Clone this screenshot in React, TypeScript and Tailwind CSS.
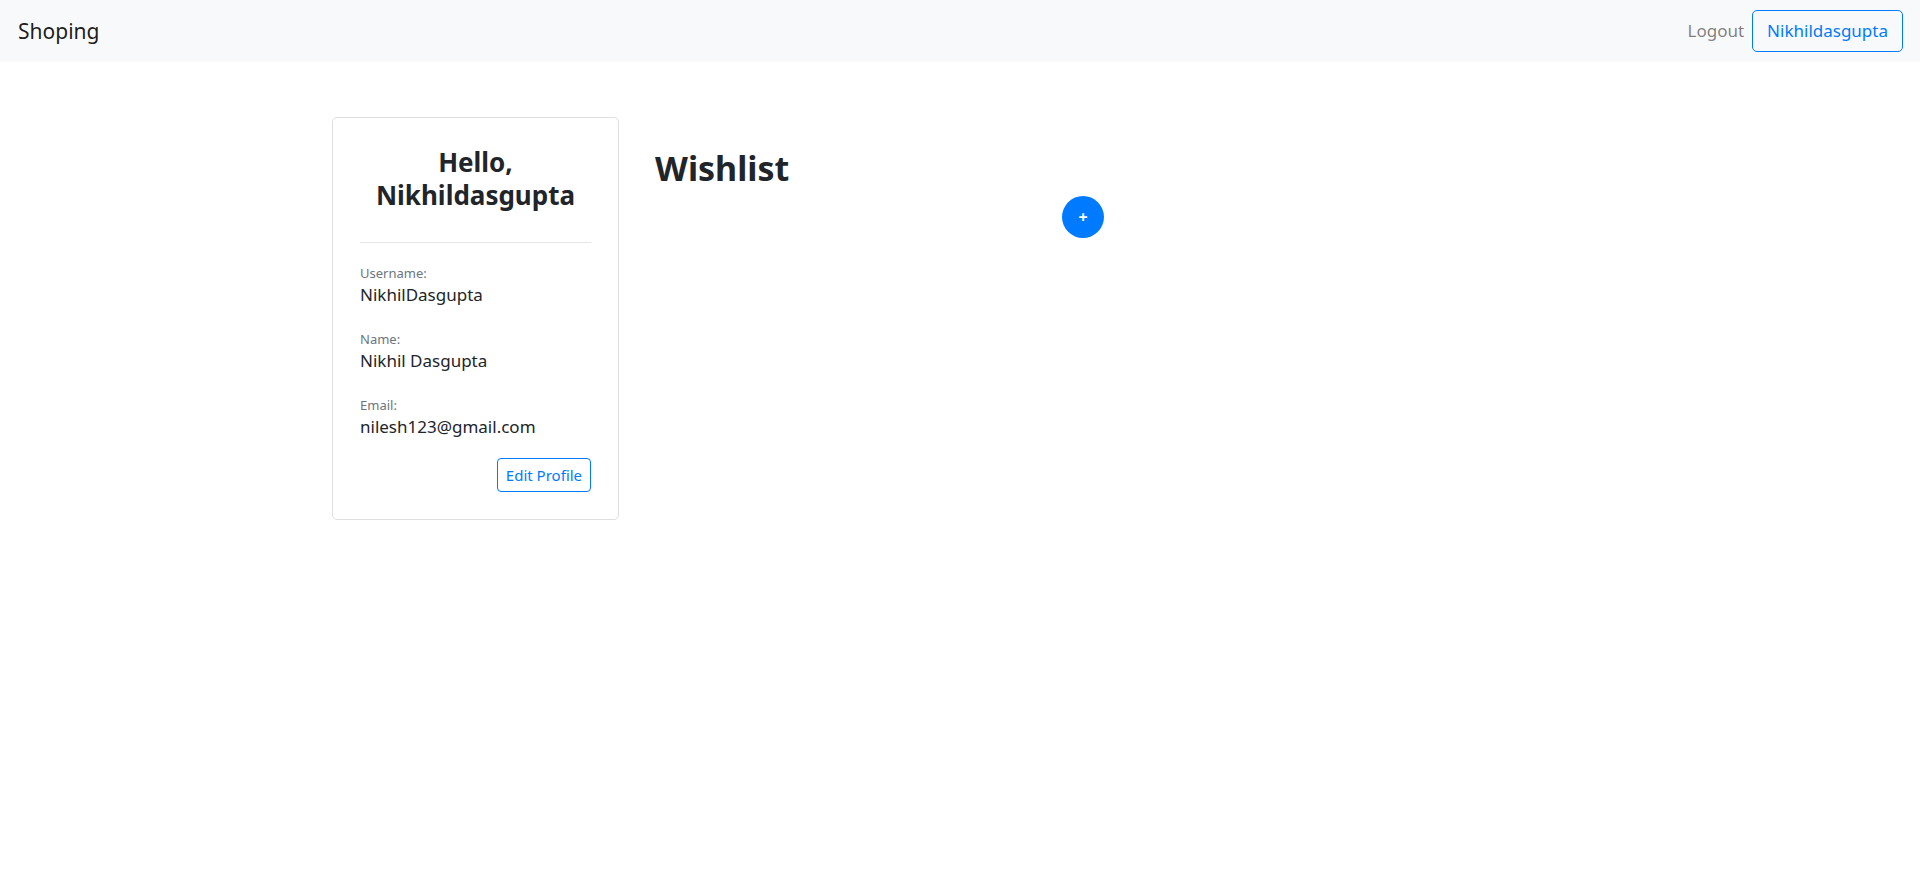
import React from "react";

export default function App() {
  return (
    <div className="min-h-screen bg-white text-[#212529] font-['Noto_Sans',sans-serif]">
      <nav className="flex h-[62px] items-center justify-between bg-[#f8f9fa] pl-[18px] pr-[17px]">
        <span className="text-[21px] leading-none text-black/90">Shoping</span>
        <div className="flex items-center gap-[8px]">
          <span className="text-[17px] text-black/50">Logout</span>
          <button className="h-[42px] rounded-[5px] border border-[#007bff] px-[14px] text-[17px] text-[#007bff]">
            Nikhildasgupta
          </button>
        </div>
      </nav>

      <main className="flex items-start gap-[36px] pl-[332px] pt-[55px]">
        <div className="w-[287px] rounded-[5px] border border-black/[0.125] px-[27px] pb-[27px] pt-[28px]">
          <h3 className="text-center text-[26px] font-bold leading-[33px]">
            <div>Hello,</div>
            <div>Nikhildasgupta</div>
          </h3>
          <hr className="mt-[30px] mb-[21px] border-black/10" />
          <div className="flex flex-col gap-[22px]">
            <div>
              <div className="text-[13px] leading-[18px] text-[#6c757d]">Username:</div>
              <div className="text-[17px] leading-[26px]">NikhilDasgupta</div>
            </div>
            <div>
              <div className="text-[13px] leading-[18px] text-[#6c757d]">Name:</div>
              <div className="text-[17px] leading-[26px]">Nikhil Dasgupta</div>
            </div>
            <div>
              <div className="text-[13px] leading-[18px] text-[#6c757d]">Email:</div>
              <div className="text-[17px] leading-[26px]">nilesh123@gmail.com</div>
            </div>
          </div>
          <div className="mt-[18px] flex justify-end">
            <button className="h-[34px] rounded-[4px] border border-[#007bff] px-[8px] text-[15px] text-[#007bff]">
              Edit Profile
            </button>
          </div>
        </div>

        <section className="w-[449px] pt-[31px]">
          <h1 className="text-[34px] font-bold leading-[40px]">Wishlist</h1>
          <div className="mt-[8px] flex justify-end">
            <button className="flex h-[42px] w-[42px] items-center justify-center rounded-full bg-[#007bff] text-[16px] font-bold text-white">
              +
            </button>
          </div>
        </section>
      </main>
    </div>
  );
}
